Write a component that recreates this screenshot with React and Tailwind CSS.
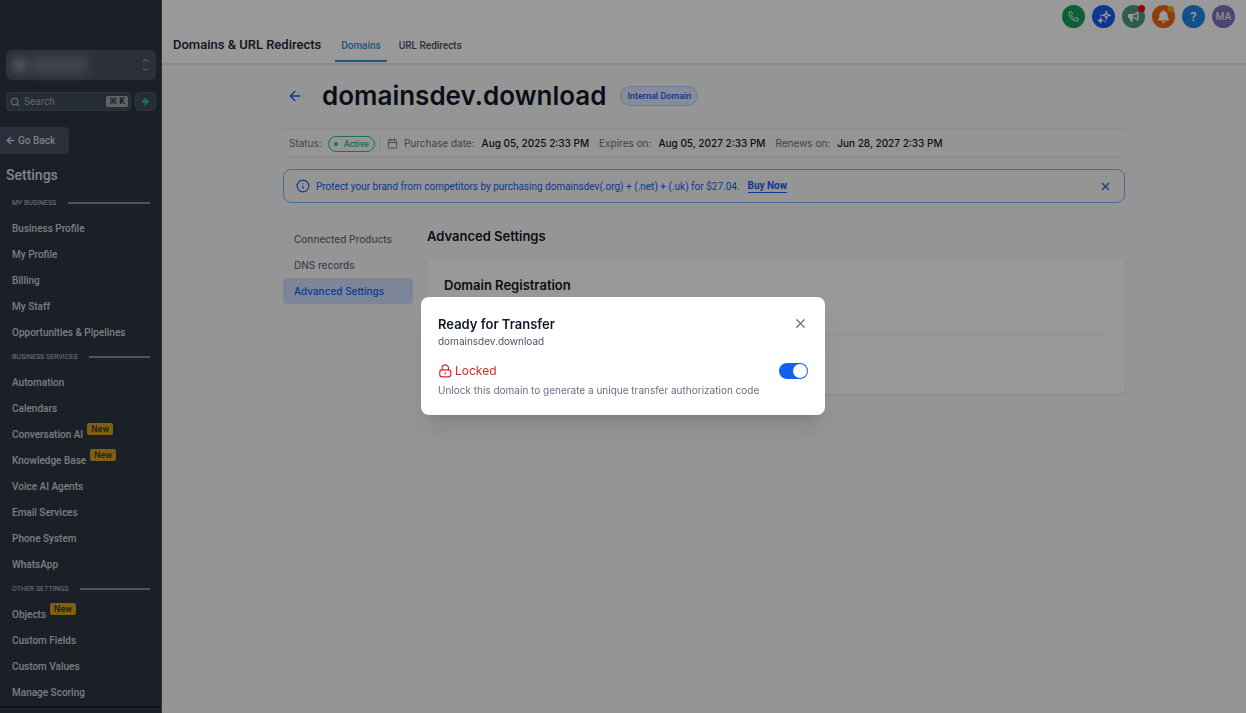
import React, { useState } from "react";
import {
  ArrowLeft,
  Calendar,
  ChevronDown,
  ChevronUp,
  Info,
  Phone,
  Search,
  X,
  Zap,
} from "lucide-react";
import { FaBell, FaBullhorn } from "react-icons/fa";

const menuSections = [
  {
    title: "MY BUSINESS",
    items: [
      { label: "Business Profile" },
      { label: "My Profile" },
      { label: "Billing" },
      { label: "My Staff" },
      { label: "Opportunities & Pipelines" },
    ],
  },
  {
    title: "BUSINESS SERVICES",
    items: [
      { label: "Automation" },
      { label: "Calendars" },
      { label: "Conversation AI", isNew: true },
      { label: "Knowledge Base", isNew: true },
      { label: "Voice AI Agents" },
      { label: "Email Services" },
      { label: "Phone System" },
      { label: "WhatsApp" },
    ],
  },
  {
    title: "OTHER SETTINGS",
    items: [
      { label: "Objects", isNew: true },
      { label: "Custom Fields" },
      { label: "Custom Values" },
      { label: "Manage Scoring" },
    ],
  },
];

const domainDates = [
  { label: "Purchase date:", value: "Aug 05, 2025 2:33 PM" },
  { label: "Expires on:", value: "Aug 05, 2027 2:33 PM" },
  { label: "Renews on:", value: "Jun 28, 2027 2:33 PM" },
];

const Sidebar = () => (
  <aside className="flex w-[162px] shrink-0 flex-col overflow-hidden border-r border-[#4b5563] bg-[#2d3644] pt-[50px] font-[Roboto,sans-serif] text-[#d1d1d1]">
    <button
      type="button"
      aria-label="Switch account"
      className="mr-[5px] ml-1.5 flex h-[30px] shrink-0 items-center justify-between rounded-md bg-[#4a535f] pr-1.5 pl-1.5"
    >
      <span className="flex items-center gap-1 blur-[5px]">
        <span className="h-4 w-4 rounded-full bg-[#8a9098]" />
        <span className="h-5 w-14 bg-[#69717b]" />
      </span>
      <span className="flex flex-col">
        <ChevronUp size={9} />
        <ChevronDown size={9} />
      </span>
    </button>

    <div className="mt-3 mr-[5px] ml-1.5 flex h-[19px] shrink-0 gap-1">
      <label className="flex min-w-0 flex-1 items-center rounded-[4px] border border-[#505966] bg-[#414b58] pr-0.5 pl-[3px]">
        <Search size={10} strokeWidth={3} className="shrink-0 text-[#a5a9af]" />
        <input
          type="text"
          placeholder="Search"
          aria-label="Search"
          className="ml-1 w-full min-w-0 bg-transparent text-[10px] leading-3 outline-none placeholder:text-[#a5a9af]"
        />
        <kbd className="shrink-0 rounded-[2px] bg-[#a4a6aa] px-[3px] font-[Roboto,'DejaVu_Sans',sans-serif] text-[9px] leading-[11px] font-bold whitespace-nowrap text-[#2d3644]">
          ⌘ K
        </kbd>
      </label>
      <button
        type="button"
        aria-label="Quick actions"
        className="flex w-[21px] items-center justify-center rounded-[4px] border border-[#505966] bg-[#414b58]"
      >
        <Zap size={9} fill="#37ca8a" className="text-[#37ca8a]" />
      </button>
    </div>

    <button
      type="button"
      className="mt-4 flex h-[27px] w-[69px] shrink-0 items-center gap-0.5 rounded-r-[4px] bg-[#485067] pl-[5px] text-[10px] font-medium"
    >
      <ArrowLeft size={11} strokeWidth={3} />
      Go Back
    </button>

    <h2 className="mt-[11px] ml-1.5 text-sm leading-5 font-medium text-[#dedede]">
      Settings
    </h2>

    <nav className="mt-1.5">
      {menuSections.map((section) => (
        <div key={section.title}>
          <div className="flex h-[24px] items-center gap-3 pr-[11px] pl-3">
            <h3 className="text-[7px] leading-3 whitespace-nowrap text-[#c4c4c4]">
              {section.title}
            </h3>
            <span className="h-0.5 flex-1 bg-[#878b93]" />
          </div>
          <ul>
            {section.items.map((item) => (
              <li key={item.label} className="h-[26px]">
                <a
                  href="#"
                  className="flex h-full items-center pl-3 text-[10px] font-medium whitespace-nowrap"
                >
                  {item.label}
                  {item.isNew && (
                    <span className="mb-2.5 ml-1 rounded-[2px] bg-[#d69e18] px-1 text-[9px] leading-[12px] text-[#2d3644]">
                      New
                    </span>
                  )}
                </a>
              </li>
            ))}
          </ul>
        </div>
      ))}
    </nav>
    <div className="mt-px border-t-2 border-[#1a202b]" />
  </aside>
);

const HeaderIcons = () => (
  <div className="flex gap-[7px] pt-[5px] pr-[11px] text-white">
    <button
      type="button"
      aria-label="Phone"
      className="flex h-[23px] w-[23px] items-center justify-center rounded-full bg-[#16a05a]"
    >
      <Phone size={11} />
    </button>
    <button
      type="button"
      aria-label="AI assistant"
      className="flex h-[23px] w-[23px] items-center justify-center rounded-full bg-[#155eef]"
    >
      <svg width="14" height="14" viewBox="0 0 24 24" fill="none" stroke="currentColor" strokeWidth="2" strokeLinejoin="round">
        <path d="M16 2l1.500 5.500L23 9l-5.500 1.500L16 16l-1.500-5.500L9 9l5.500-1.500z" />
        <path d="M6 14l1 3 3 1-3 1-1 3-1-3-3-1 3-1z" />
        <path d="M6 9v1M14 19v1" strokeLinecap="round" />
      </svg>
    </button>
    <button
      type="button"
      aria-label="Announcements"
      className="relative flex h-[23px] w-[23px] items-center justify-center rounded-full bg-[#4e9b80]"
    >
      <FaBullhorn size={11} />
      <span className="absolute top-0 right-0 h-[7px] w-[7px] rounded-full bg-[#ff0000]" />
    </button>
    <button
      type="button"
      aria-label="Notifications"
      className="relative flex h-[23px] w-[23px] items-center justify-center rounded-full bg-[#f2650f]"
    >
      <FaBell size={13} />
      <span className="absolute top-px right-px h-1.5 w-1.5 rounded-full bg-[#eab308]" />
    </button>
    <button
      type="button"
      aria-label="Help"
      className="flex h-[23px] w-[23px] items-center justify-center rounded-full bg-[#2187e7] text-[13px] font-medium"
    >
      ?
    </button>
    <button
      type="button"
      aria-label="Account"
      className="flex h-[23px] w-[23px] items-center justify-center rounded-full bg-[#8173bb] text-[10px]"
    >
      MA
    </button>
  </div>
);

const Header = () => (
  <header className="flex h-[65px] items-start justify-between border-b-2 border-[#e4e4e7] bg-white pl-[11px] font-[Roboto,sans-serif]">
    <div className="flex pt-7">
      <h1 className="mr-3.5 pt-2 text-[13px] leading-[18px] font-medium text-[#1d2534]">
        Domains &amp; URL Redirects
      </h1>
      <nav className="flex gap-1.5 text-[10px] font-medium">
        <a href="#" className="h-[34px] border-b-2 border-[#2a94cf] px-1.5 pt-2.5 text-[#2a94cf]">
          Domains
        </a>
        <a href="#" className="h-[34px] px-1.5 pt-2.5 text-[#4b5563]">
          URL Redirects
        </a>
      </nav>
    </div>
    <HeaderIcons />
  </header>
);

const DomainPage = () => (
  <main className="mx-auto w-full max-w-[842px] pt-[13px]">
    <div className="flex h-9 items-center">
      <button type="button" aria-label="Back" className="ml-1 text-[#155eef]">
        <ArrowLeft size={16} />
      </button>
      <h2 className="ml-[19px] text-[26px] leading-9 font-semibold text-[#101828]">
        domainsdev.download
      </h2>
      <span className="ml-3.5 rounded-full border border-[#b2ccff] bg-[#e0eaff] px-1.5 font-[Roboto,sans-serif] text-[9px] leading-[18px] font-medium text-[#155eef]">
        Internal Domain
      </span>
    </div>

    <div className="mt-[15px] flex h-[29px] items-center border-y border-[#e4e7ec] pl-1.5 text-[10px] whitespace-nowrap text-[#667085]">
      <span>Status:</span>
      <span className="ml-1.5 flex items-center gap-1.5 rounded-full border border-[#32c07a] px-[5px] font-[Roboto,sans-serif] text-[9px] leading-[14px] font-medium text-[#32c07a]">
        <span className="h-1 w-1 rounded-full bg-[#32c07a]" />
        Active
      </span>
      <span className="mr-1.5 ml-[5px] h-4 w-px bg-[#e4e7ec]" />
      <Calendar size={11} />
      <dl className="ml-1.5 flex gap-2.5">
        {domainDates.map((date) => (
          <div key={date.label} className="flex gap-[7px]">
            <dt>{date.label}</dt>
            <dd className="font-medium text-[#101828]">{date.value}</dd>
          </div>
        ))}
      </dl>
    </div>

    <div className="mt-[11px] flex h-[34px] items-center rounded-lg border border-[#84adff] px-3 font-[Roboto,sans-serif] text-[10px] text-[#155eef]">
      <Info size={14} />
      <p className="ml-1.5">
        Protect your brand from competitors by purchasing domainsdev(.org) + (.net) + (.uk) for $27.04.
      </p>
      <a href="#" className="ml-2 border-b border-[#155eef] leading-3 font-bold">
        Buy Now
      </a>
      <button type="button" aria-label="Dismiss" className="ml-auto">
        <X size={13} />
      </button>
    </div>

    <div className="mt-[23px] flex gap-3.5">
      <nav className="flex w-[130px] shrink-0 flex-col text-[10px] font-medium text-[#667085]">
        <a href="#" className="flex h-[26px] items-center px-[11px]">
          Connected Products
        </a>
        <a href="#" className="flex h-[26px] items-center px-[11px]">
          DNS records
        </a>
        <a
          href="#"
          className="flex h-[26px] items-center rounded-[4px] bg-[#d1e0ff] px-[11px] text-[#155eef]"
        >
          Advanced Settings
        </a>
      </nav>
      <section className="min-w-0 flex-1 text-[#101828]">
        <h3 className="text-[13px] leading-5 font-semibold">Advanced Settings</h3>
        <div className="mt-3 h-[136px] rounded-[4px] bg-[#fdfdfd] px-[17px] pt-[17px] shadow-sm">
          <h4 className="text-[13px] leading-5 font-semibold">Domain Registration</h4>
          <div className="mt-10 border-t border-[#f6f6f8]" />
        </div>
      </section>
    </div>
  </main>
);

const TransferDialog = () => {
  const [locked, setLocked] = useState(true);

  return (
    <div className="fixed inset-0 flex items-center justify-center bg-black/40 pb-0.5">
      <div
        role="dialog"
        aria-labelledby="transfer-title"
        className="w-[404px] rounded-lg bg-white px-[17px] pt-[17px] pb-4 shadow-xl"
      >
        <div className="flex items-center justify-between">
          <h2 id="transfer-title" className="text-[13px] leading-5 font-semibold text-[#101828]">
            Ready for Transfer
          </h2>
          <button type="button" aria-label="Close" className="text-[#667085]">
            <X size={15} />
          </button>
        </div>
        <p className="text-[10px] leading-[15px] text-[#475467]">domainsdev.download</p>

        <div className="mt-3 flex items-center justify-between">
          <span className="flex items-center gap-[3px] text-xs leading-5 text-[#dc2626]">
            <svg width="14" height="14" viewBox="0 0 24 24" fill="none" stroke="currentColor" strokeWidth="2" strokeLinecap="round">
              <rect x="3" y="10" width="19" height="12" rx="4" />
              <path d="M7 10V7a5 5 0 0 1 11 0v3M12.500 15v2" />
            </svg>
            Locked
          </span>
          <label
            className={
              locked
                ? "relative flex h-4 w-[29px] items-center justify-end rounded-full bg-[#155eef] px-px"
                : "relative flex h-4 w-[29px] items-center justify-start rounded-full bg-[#d0d5dd] px-px"
            }
          >
            <input
              type="checkbox"
              aria-label="Domain lock"
              checked={locked}
              onChange={(e) => setLocked(e.target.checked)}
              className="absolute inset-0 h-full w-full opacity-0"
            />
            <span className="h-3.5 w-3.5 rounded-full bg-white" />
          </label>
        </div>
        <p className="text-[10px] leading-[18px] text-[#667085]">
          Unlock this domain to generate a unique transfer authorization code
        </p>
      </div>
    </div>
  );
};

const App = () => (
  <div className="flex h-screen overflow-hidden bg-[#f9f9fa] font-[Inter,sans-serif]">
    <Sidebar />
    <div className="flex min-w-0 flex-1 flex-col">
      <Header />
      <DomainPage />
    </div>
    <TransferDialog />
  </div>
);

export default App;
